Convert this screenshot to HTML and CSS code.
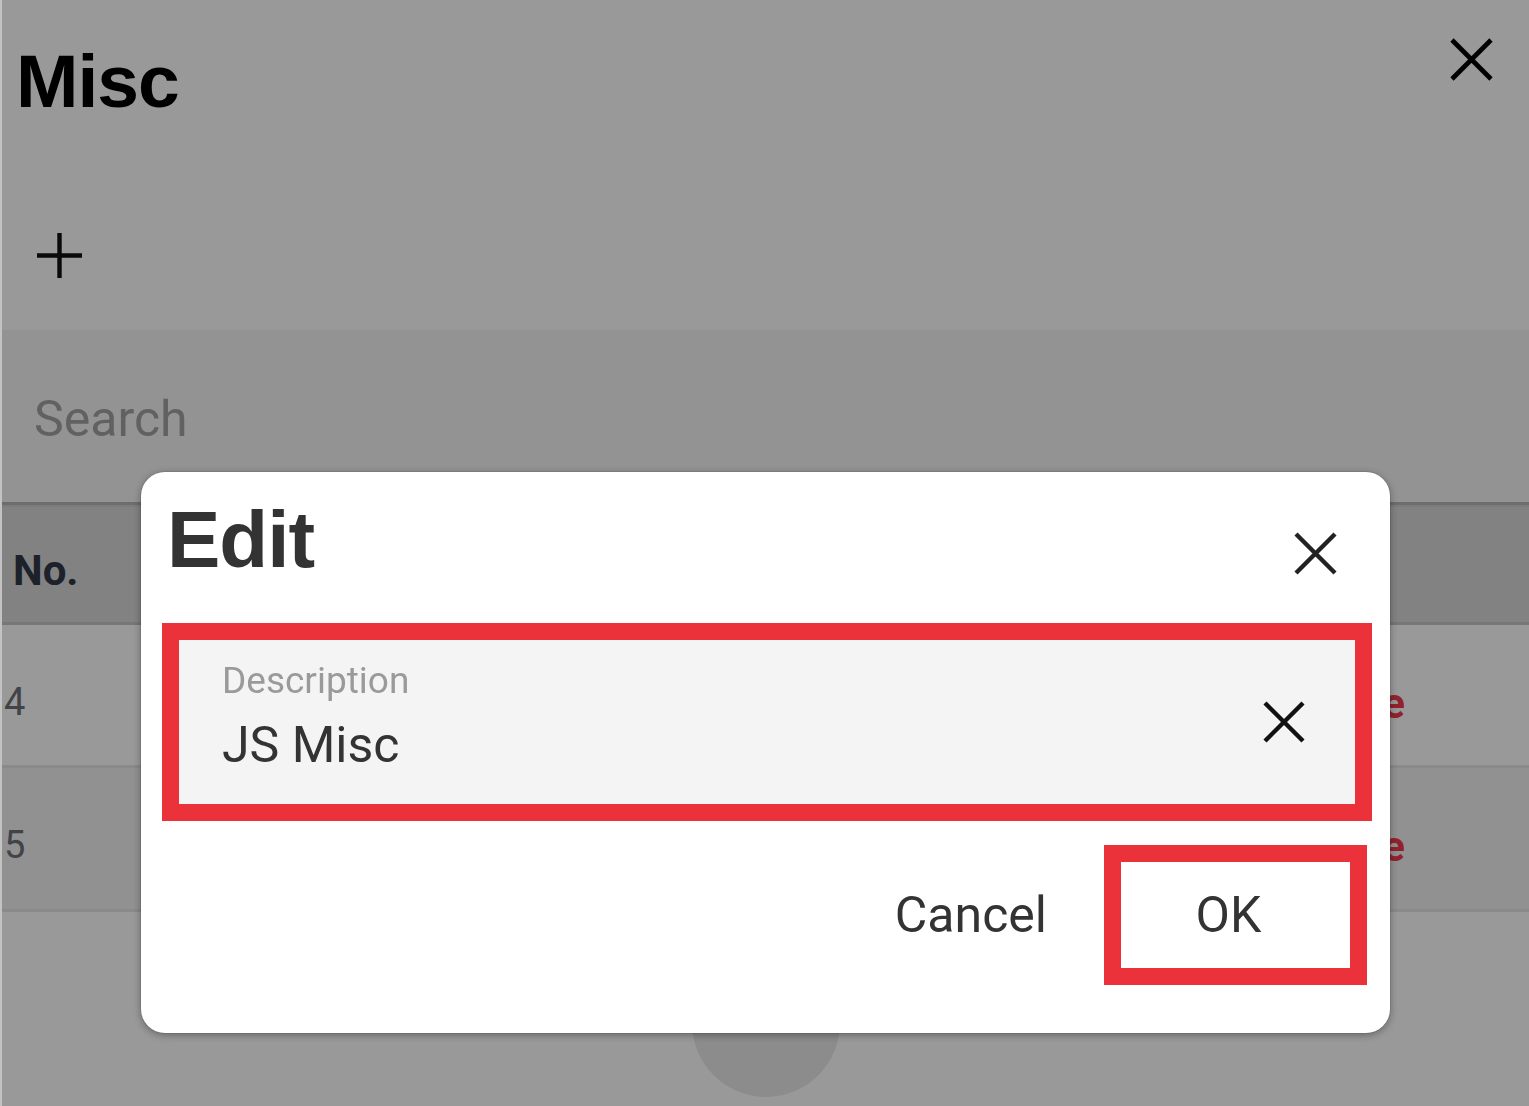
FILE: index.html
```html
<!DOCTYPE html>
<html lang="en">
<head>
<meta charset="utf-8">
<title>Misc - Edit</title>
<link rel="stylesheet" href="styles.css">
</head>
<body>
<div class="page">
  <header class="topbar">
    <h1 class="page-title">Misc</h1>
    <button class="icon-btn page-close" aria-label="Close">
      <svg width="43" height="43" viewBox="0 0 43 43"><path d="M2 2L41 41M41 2L2 41" stroke="#000" stroke-width="4.6" fill="none"/></svg>
    </button>
  </header>
  <div class="toolbar">
    <button class="icon-btn add-btn" aria-label="Add">
      <svg width="45" height="45" viewBox="0 0 45 45"><path d="M22.5 0V45M0 22.5H45" stroke="#111" stroke-width="4.4" fill="none"/></svg>
    </button>
  </div>
  <div class="search">
    <span class="search-placeholder">Search</span>
  </div>
  <div class="table">
    <div class="thead">
      <div class="cell col-no">No.</div>
      <div class="cell col-desc"></div>
      <div class="cell col-act"></div>
    </div>
    <div class="trow">
      <div class="cell col-no num">4</div>
      <div class="cell col-desc"></div>
      <div class="cell col-act"><span class="delete">Delete</span></div>
    </div>
    <div class="trow alt">
      <div class="cell col-no num">5</div>
      <div class="cell col-desc"></div>
      <div class="cell col-act"><span class="delete">Delete</span></div>
    </div>
  </div>
  <div class="pager">
    <span class="pager-ripple"></span>
  </div>
</div>

<div class="scrim"></div>

<div class="dialog" role="dialog" aria-label="Edit">
  <div class="dialog-header">
    <h2 class="dialog-title">Edit</h2>
    <button class="icon-btn dialog-close" aria-label="Close">
      <svg width="43" height="43" viewBox="0 0 43 43"><path d="M2 2L41 41M41 2L2 41" stroke="#222" stroke-width="4.4" fill="none"/></svg>
    </button>
  </div>
  <div class="field highlight">
    <div class="field-inner">
      <div class="field-text">
        <div class="field-label">Description</div>
        <div class="field-value">JS Misc</div>
      </div>
      <button class="icon-btn clear-btn" aria-label="Clear">
        <svg width="42" height="42" viewBox="0 0 42 42"><path d="M2 2L40 40M40 2L2 40" stroke="#111" stroke-width="4.4" fill="none"/></svg>
      </button>
    </div>
  </div>
  <div class="actions">
    <button class="text-btn cancel-btn">Cancel</button>
    <button class="text-btn ok-btn highlight">OK</button>
  </div>
</div>
</body>
</html>
```

FILE: styles.css
```css
* { box-sizing: border-box; }

html, body {
  margin: 0;
  padding: 0;
  height: 100%;
}

body {
  background: #c3c3c3;
  font-family: Roboto, "Liberation Sans", Arial, sans-serif;
  overflow: hidden;
}

.page {
  margin-left: 2px;
  height: 100%;
  background: #fff;
}

.icon-btn {
  background: none;
  border: 0;
  padding: 0;
  margin: 0;
  display: block;
  cursor: pointer;
}
.icon-btn svg { display: block; }

/* top bar */
.topbar {
  height: 170px;
  display: flex;
  justify-content: space-between;
  align-items: flex-start;
}
.page-title {
  margin: 44px 0 0 14px;
  font-family: "Liberation Sans", Arial, sans-serif;
  font-weight: 700;
  font-size: 75px;
  line-height: 1;
  color: #000;
  letter-spacing: -1px;
}
.page-close {
  margin: 38px 36px 0 0;
}

.toolbar {
  height: 160px;
  padding: 63px 0 0 35px;
}

/* search */
.search {
  height: 175px;
  background: #f5f5f5;
  border-bottom: 3px solid #b6b6b6;
  padding: 64px 0 0 32px;
}
.search-placeholder {
  display: block;
  font-size: 50px;
  line-height: 1;
  color: #a2a2a2;
}

/* table */
.thead, .trow {
  display: grid;
  grid-template-columns: 137px 1fr auto;
}
.thead {
  height: 120px;
  background: #d9d9d9;
  border-top: 2px solid #cfcfcf;
  border-bottom: 3px solid #c6c6c6;
}
.thead .col-no {
  padding: 43px 0 0 11px;
  font-weight: 700;
  font-size: 42px;
  line-height: 1;
  color: #303846;
}
.trow {
  height: 143px;
  border-bottom: 3px solid #e6e6e6;
  background: #fff;
}
.trow.alt {
  height: 144px;
  background: #f2f2f2;
}
.trow .cell { padding-top: 58px; }
.num {
  padding-left: 2px;
  font-size: 38px;
  line-height: 1;
  color: #6e7078;
}
.col-act {
  padding-right: 124px;
  text-align: right;
}
.delete {
  font-weight: 700;
  font-size: 42px;
  line-height: 1;
  color: #f23a4c;
}

/* pager */
.pager {
  display: flex;
  justify-content: center;
  padding-top: 37px;
}
.pager-ripple {
  display: block;
  width: 148px;
  height: 148px;
  border-radius: 50%;
  background: #e9e9e9;
}

/* overlay */
.scrim {
  position: fixed;
  top: 0;
  right: 0;
  bottom: 0;
  left: 2px;
  background: rgba(0, 0, 0, 0.4);
}

/* dialog */
.dialog {
  position: fixed;
  left: 141px;
  top: 472px;
  width: 1249px;
  background: #fff;
  border-radius: 24px;
  padding: 28px 18px 48px 21px;
  box-shadow: 0 0 0 1px rgba(0,0,0,0.08), 0 2px 8px rgba(0, 0, 0, 0.35);
}
.dialog-header {
  height: 80px;
  display: flex;
  justify-content: space-between;
  align-items: flex-start;
}
.dialog-title {
  margin: 0 0 0 5px;
  font-family: "Liberation Sans", Arial, sans-serif;
  font-weight: 700;
  font-size: 80px;
  line-height: 1;
  color: #333;
  letter-spacing: -1px;
}
.dialog-close {
  margin: 32px 35px 0 0;
}

.field {
  margin-top: 43px;
  height: 198px;
}
.field-inner {
  height: 164px;
  background: #f4f4f4;
  display: flex;
  align-items: center;
  justify-content: space-between;
  padding: 0 50px 0 43px;
}
.field-text {
  height: 164px;
  padding-top: 22px;
}
.field-label {
  font-size: 37px;
  line-height: 1;
  color: #9a9a9a;
  margin-bottom: 21px;
}
.field-value {
  font-size: 50px;
  line-height: 1;
  color: #333;
}

.actions {
  margin-top: 24px;
  display: flex;
  justify-content: flex-end;
  align-items: center;
  padding-right: 5px;
}
.text-btn {
  font-family: Roboto, "Liberation Sans", Arial, sans-serif;
  font-size: 50px;
  line-height: 1;
  color: #333;
  background: #fff;
  border: 0;
  padding: 0;
  cursor: pointer;
}
.cancel-btn {
  margin-right: 57px;
}
.ok-btn {
  width: 263px;
  height: 140px;
  padding: 0 14px 0 0;
  text-align: center;
}

/* annotation outline used on the field and the OK button */
.highlight,
.text-btn.highlight {
  border: 17px solid #eb3139;
}
```
